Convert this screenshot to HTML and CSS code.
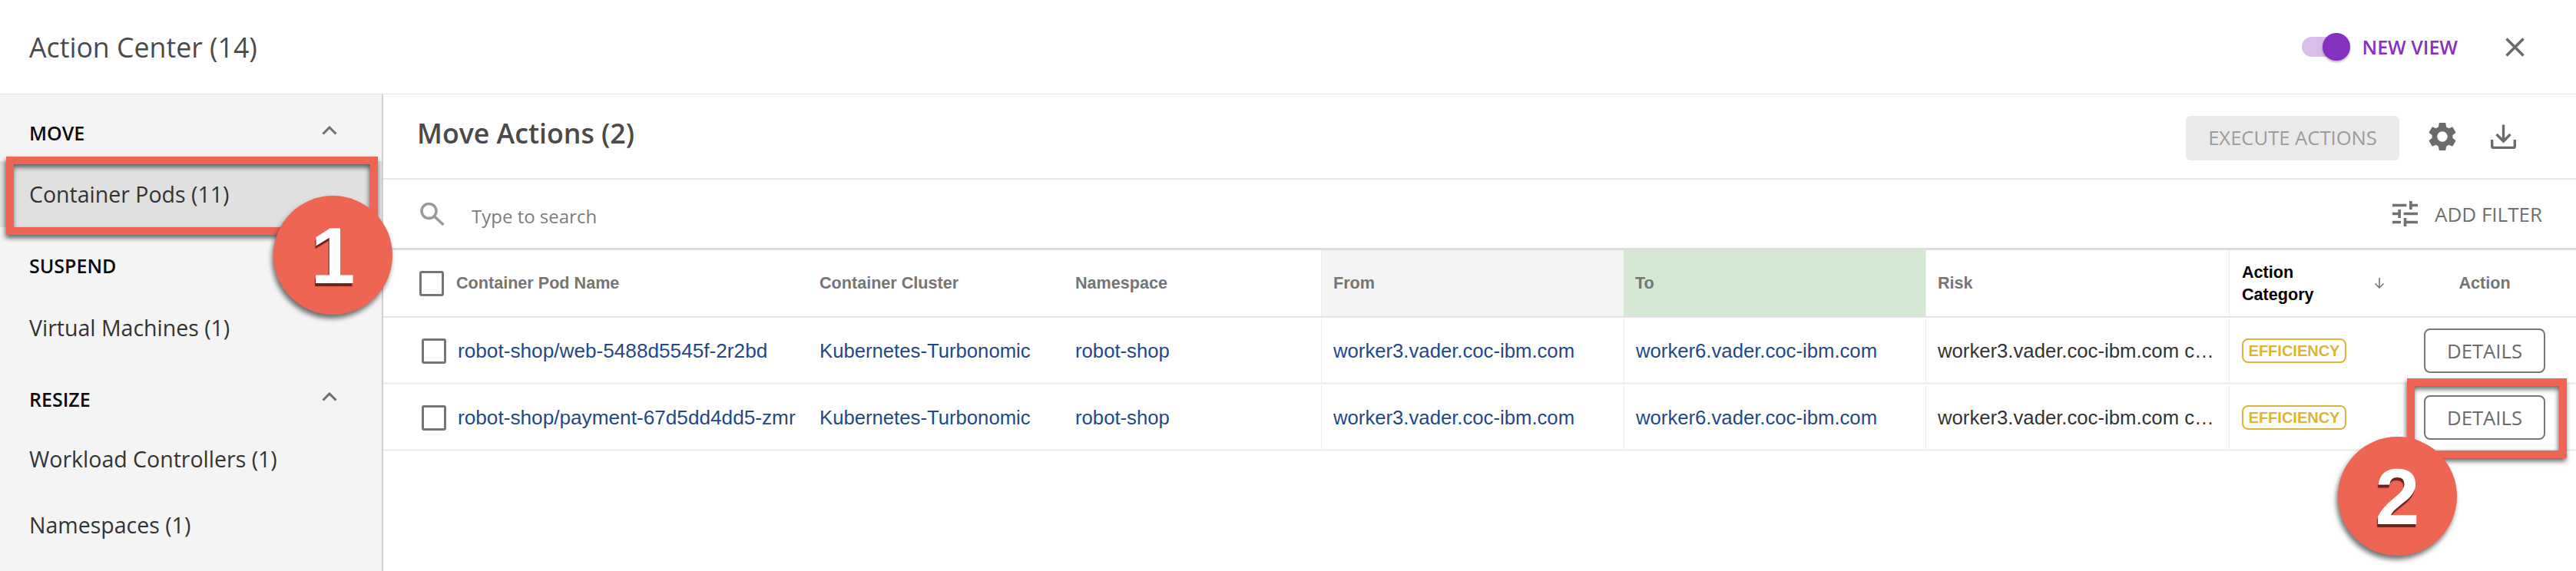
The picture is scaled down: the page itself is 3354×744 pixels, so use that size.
FILE: index.html
```html
<!DOCTYPE html>
<html lang="en">
<head>
<meta charset="utf-8">
<title>Action Center</title>
<link rel="stylesheet" href="styles.css">
</head>
<body>
<div class="app">
  <header class="topbar">
    <h1 class="title">Action Center (14)</h1>
    <div class="topbar-tools">
      <span class="toggle"><span class="knob"></span></span>
      <span class="view-label">NEW VIEW</span>
      <svg class="close" viewBox="0 0 25 25"><path d="M1.5 1.5l22 22M23.5 1.5l-22 22"/></svg>
    </div>
  </header>
  <div class="body">
    <nav class="sidebar">
      <div class="group">MOVE<svg class="chev" viewBox="0 0 20 12"><path d="M1.5 10.5L10 2l8.500 8.500"/></svg></div>
      <div class="item selected">Container Pods (11)</div>
      <div class="group">SUSPEND</div>
      <div class="item">Virtual Machines (1)</div>
      <div class="group">RESIZE<svg class="chev" viewBox="0 0 20 12"><path d="M1.5 10.500L10 2l8.500 8.500"/></svg></div>
      <div class="item">Workload Controllers (1)</div>
      <div class="item">Namespaces (1)</div>
    </nav>
    <main class="main">
      <div class="main-head">
        <h2 class="main-title">Move Actions (2)</h2>
        <button class="execute">EXECUTE ACTIONS</button>
        <svg class="gear" viewBox="2.400 1.800 19.200 20.400"><path d="M19.140 12.940c.04-.3.06-.61.06-.94 0-.32-.02-.64-.07-.94l2.030-1.580c.18-.14.23-.41.12-.61l-1.920-3.320c-.12-.22-.37-.29-.59-.22l-2.390.96c-.5-.38-1.030-.7-1.620-.94l-.36-2.540c-.04-.24-.24-.41-.48-.41h-3.840c-.24 0-.43.17-.47.41l-.36 2.540c-.59.24-1.130.57-1.620.94l-2.390-.96c-.22-.08-.47 0-.59.22L2.740 8.870c-.12.21-.08.47.12.61l2.030 1.580c-.05.3-.09.63-.09.94s.02.64.07.94l-2.030 1.580c-.18.14-.23.41-.12.61l1.920 3.320c.12.22.37.29.59.22l2.390-.96c.5.38 1.030.7 1.620.94l.36 2.540c.05.24.24.41.48.41h3.840c.24 0 .44-.17.47-.41l.36-2.540c.59-.24 1.130-.56 1.620-.94l2.390.96c.22.08.47 0 .59-.22l1.920-3.320c.12-.22.07-.47-.12-.61l-2.010-1.580zM12 15.600c-1.980 0-3.600-1.620-3.600-3.600s1.620-3.600 3.600-3.600 3.600 1.620 3.600 3.600-1.620 3.600-3.600 3.600z"/></svg>
        <svg class="download" viewBox="0 0 33 33"><path d="M16.500 1.500v21M7.500 14l9 9 9-9M1.700 21v8.500c0 1.200.8 2 2 2h25.600c1.200 0 2-.8 2-2V21"/></svg>
      </div>
      <div class="search">
        <svg class="search-icon" viewBox="0 0 32 30"><circle cx="11.500" cy="11" r="9.500"/><path d="M18.500 18l12 11"/></svg>
        <span class="placeholder">Type to search</span>
        <svg class="tune" viewBox="3 3 18 18"><path d="M3 17v2h6v-2H3zM3 5v2h10V5H3zm10 16v-2h8v-2h-8v-2h-2v6h2zM7 9v2H3v2h4v2h2V9H7zm14 4v-2H11v2h10zm-6-4h2V7h4V5h-4V3h-2v6z"/></svg>
        <span class="add-filter">ADD FILTER</span>
      </div>
      <div class="row head-row">
        <div class="cell first"><span class="check head-check"></span>Container Pod Name</div>
        <div class="cell">Container Cluster</div>
        <div class="cell">Namespace</div>
        <div class="cell from">From</div>
        <div class="cell to">To</div>
        <div class="cell rule">Risk</div>
        <div class="cell rule sorted"><span class="sort-label">Action Category</span><svg class="sort" viewBox="0 0 14 14"><path d="M7 0v13M1.500 7.500L7 13l5.500-5.500"/></svg></div>
        <div class="cell center">Action</div>
      </div>
      <div class="row data-row">
        <div class="cell first"><span class="check"></span><a class="link">robot-shop/web-5488d5545f-2r2bd</a></div>
        <div class="cell"><a class="link">Kubernetes-Turbonomic</a></div>
        <div class="cell"><a class="link">robot-shop</a></div>
        <div class="cell rule"><a class="link">worker3.vader.coc-ibm.com</a></div>
        <div class="cell rule"><a class="link">worker6.vader.coc-ibm.com</a></div>
        <div class="cell rule"><span class="risk">worker3.vader.coc-ibm.com c…</span></div>
        <div class="cell rule"><span class="badge">EFFICIENCY</span></div>
        <div class="cell center"><button class="details">DETAILS</button></div>
      </div>
      <div class="row data-row">
        <div class="cell first"><span class="check"></span><a class="link">robot-shop/payment-67d5dd4dd5-zmr</a></div>
        <div class="cell"><a class="link">Kubernetes-Turbonomic</a></div>
        <div class="cell"><a class="link">robot-shop</a></div>
        <div class="cell rule"><a class="link">worker3.vader.coc-ibm.com</a></div>
        <div class="cell rule"><a class="link">worker6.vader.coc-ibm.com</a></div>
        <div class="cell rule"><span class="risk">worker3.vader.coc-ibm.com c…</span></div>
        <div class="cell rule"><span class="badge">EFFICIENCY</span></div>
        <div class="cell center"><button class="details">DETAILS</button></div>
      </div>
    </main>
  </div>
  <div class="callout box-one"></div>
  <div class="marker marker-one">1</div>
  <div class="callout box-two"></div>
  <div class="marker marker-two">2</div>
</div>
</body>
</html>
```

FILE: styles.css
```css
* { box-sizing: border-box; }
html, body { margin: 0; padding: 0; background: #fff; }
.app {
  position: relative;
  width: 3354px;
  height: 744px;
  overflow: hidden;
  font-family: "Open Sans", "Noto Sans", sans-serif;
  color: #444;
}
.topbar {
  height: 123px;
  display: flex;
  align-items: center;
  justify-content: space-between;
  padding: 0 67px 0 38px;
  border-bottom: 1px solid #e4e4e4;
}
.title { margin: 0; font-size: 35.700px; font-weight: 400; color: #4a4a4a; }
.topbar-tools { display: flex; align-items: center; }
.toggle {
  position: relative;
  display: block;
  width: 53px;
  height: 26px;
  border-radius: 13px;
  background: #d8bee9;
}
.knob {
  position: absolute;
  right: -10px;
  top: -5px;
  width: 36px;
  height: 36px;
  border-radius: 50%;
  background: #8430c0;
  box-shadow: 0 2px 3px rgba(0,0,0,.3);
}
.view-label { margin-left: 26px; font-size: 25px; font-weight: 600; color: #8a2fc2; }
.close { width: 25px; height: 25px; margin-left: 62px; fill: none; stroke: #6a6a6a; stroke-width: 3.500; }

.body { display: flex; height: 621px; }
.sidebar {
  width: 499px;
  flex: none;
  display: grid;
  grid-template-rows: 87px 86px 88px 86px 85px 86px 86px;
  align-content: start;
  background: #f4f4f4;
  border-right: 2px solid #d0d0d0;
}
.group {
  display: flex;
  justify-content: space-between;
  padding: 33px 58px 0 38px;
  font-size: 25px;
  font-weight: 600;
  color: #0a0a0a;
  line-height: 34px;
}
.chev { width: 20px; height: 12px; margin-top: 8px; fill: none; stroke: #6e6e6e; stroke-width: 3; }
.item { display: flex; align-items: center; padding-left: 38px; font-size: 28.500px; color: #333; }
.selected { background: #e0e0e0; }

.main { flex: 1; min-width: 0; }
.main-head {
  height: 111px;
  display: flex;
  align-items: center;
  padding: 0 78px 0 44px;
  border-bottom: 2px solid #e8e8e8;
}
.main-title { margin: 0 auto 10px 0; font-size: 35.700px; font-weight: 600; color: #4a4a4a; }
.execute {
  width: 278px;
  height: 58px;
  margin-top: 4px;
  padding: 0;
  border: 0;
  border-radius: 6px;
  background: #eaeaea;
  color: #9c9c9c;
  font: 25.600px "Open Sans", sans-serif;
}
.gear { width: 36px; height: 38px; margin-left: 38px; fill: #6b6b6b; }
.download { width: 33px; height: 33px; margin-left: 45px; fill: none; stroke: #6b6b6b; stroke-width: 3.400; }
.search {
  height: 92px;
  display: flex;
  align-items: center;
  padding: 0 44px 0 48px;
  border-bottom: 3px solid #dedede;
}
.search-icon { width: 32px; height: 30px; fill: none; stroke: #9a9a9a; stroke-width: 3.500; }
.placeholder { margin: 5px auto 0 35px; font-size: 24px; color: #7d7d7d; }
.tune { width: 33px; height: 33px; fill: #707070; }
.add-filter { margin-left: 22px; font-size: 26px; color: #6f6f6f; }

.row {
  display: grid;
  grid-template-columns: 553px 333px 335px 394px 393px 395px 214px 238px;
}
.cell { display: flex; align-items: center; padding-left: 15px; min-width: 0; }
.cell.first { padding-left: 47px; }
.head-row { height: 88px; border-bottom: 2px solid #e4e4e4; font: bold 21.600px "Liberation Sans", Arial, sans-serif; color: #757575; }
.data-row { height: 87px; padding-top: 2px; border-bottom: 3px solid #f0f0f0; font: 25.700px "Liberation Sans", Arial, sans-serif; }
.from { background: #f4f4f4; border-left: 1px solid #ececec; }
.to { background: #d5e8d4; }
.rule { border-left: 1px solid #ececec; }
.center { justify-content: center; padding-left: 0; }
.check {
  flex: none;
  width: 32px;
  height: 33px;
  margin: 0 15px 0 3px;
  border: 3.500px solid #757575;
  border-radius: 3px;
}
.head-check { margin: 0 16px 0 0; }
.link { color: #23488a; white-space: nowrap; }
.first .link { font-size: 26.200px; }
.risk { display: block; white-space: nowrap; color: #333; }
.sorted { padding-left: 16px; color: #000; line-height: 29px; }
.sort-label { width: 120px; }
.sort { width: 14px; height: 14px; margin-left: 52px; fill: none; stroke: #777; stroke-width: 1.600; }
.badge {
  width: 136px;
  height: 32px;
  margin-left: 1px;
  display: flex;
  align-items: center;
  justify-content: center;
  border: 2px solid #dcb53c;
  border-radius: 8px;
  color: #dcb43a;
  font: bold 20px "Liberation Sans", Arial, sans-serif;
}
.details {
  width: 158px;
  height: 58px;
  padding: 0;
  background: #fff;
  border: 2px solid #777;
  border-radius: 8px;
  color: #6a6a6a;
  font: 25.700px "Open Sans", sans-serif;
}

.callout {
  position: absolute;
  border: 10px solid #ee6554;
  filter: drop-shadow(-1px 4px 3px rgba(0,0,0,.6));
}
.box-one { left: 8px; top: 204px; width: 484px; height: 102px; }
.box-two { left: 3134px; top: 493px; width: 208px; height: 104px; }
.marker {
  position: absolute;
  width: 155px;
  height: 155px;
  padding-top: 2px;
  display: flex;
  align-items: center;
  justify-content: center;
  border-radius: 50%;
  background: #ee6554;
  box-shadow: -2px 5px 6px rgba(0,0,0,.55);
  color: #fff;
  font: bold 104px "Liberation Sans", Arial, sans-serif;
  text-shadow: -1px 4px 1px #6d2018;
}
.marker-one { left: 356px; top: 255px; }
.marker-two { left: 3044px; top: 569px; }
```
